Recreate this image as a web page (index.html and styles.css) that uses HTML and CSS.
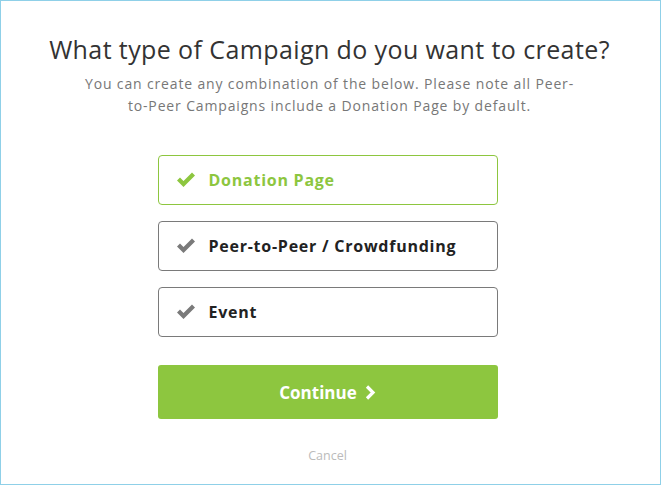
FILE: index.html
```html
<!DOCTYPE html>
<html>
<head>
<meta charset="utf-8">
<link rel="stylesheet" href="styles.css">
</head>
<body>
<div class="modal">
  <h1 class="title">What type of Campaign do you want to create?</h1>
  <p class="subtitle">You can create any combination of the below. Please note all Peer-<br>to-Peer Campaigns include a Donation Page by default.</p>
  <div class="options">
    <div class="option selected">
      <svg class="check" viewBox="0 0 20 16" width="20" height="16"><path d="M1 8.5 L4 5.5 L7.5 9 L16 0.5 L19 3.5 L7.5 15 Z"/></svg>
      <span class="label">Donation Page</span>
    </div>
    <div class="option">
      <svg class="check" viewBox="0 0 20 16" width="20" height="16"><path d="M1 8.5 L4 5.5 L7.5 9 L16 0.5 L19 3.5 L7.5 15 Z"/></svg>
      <span class="label">Peer-to-Peer / Crowdfunding</span>
    </div>
    <div class="option">
      <svg class="check" viewBox="0 0 20 16" width="20" height="16"><path d="M1 8.5 L4 5.5 L7.5 9 L16 0.5 L19 3.5 L7.5 15 Z"/></svg>
      <span class="label">Event</span>
    </div>
  </div>
  <button class="continue">Continue <svg class="chev" viewBox="0 0 11 15" width="11" height="15"><path d="M2 1.5 L8 7.5 L2 13.5" fill="none" stroke="#fff" stroke-width="3.2"/></svg></button>
  <div class="cancel">Cancel</div>
</div>
</body>
</html>
```
FILE: styles.css
```css
html, body {
  margin: 0;
  padding: 0;
  background: #fff;
}
.modal {
  box-sizing: border-box;
  width: 661px;
  height: 485px;
  border: 1px solid #8fd0e8;
  padding-right: 2px;
  display: flex;
  flex-direction: column;
  align-items: center;
  font-family: "Open Sans", sans-serif;
}
.title {
  margin: 31px 0 0;
  font-size: 25px;
  font-weight: 400;
  color: #333;
  line-height: 34px;
  letter-spacing: 0.4px;
}
.subtitle {
  margin: 7px 0 0;
  font-size: 14px;
  line-height: 22px;
  color: #777;
  text-align: center;
  letter-spacing: 0.85px;
}
.options {
  margin-top: 38px;
  margin-right: 4px;
  display: flex;
  flex-direction: column;
  gap: 16px;
}
.option {
  box-sizing: border-box;
  width: 340px;
  height: 50px;
  border: 1px solid #7a7a7a;
  border-radius: 4px;
  display: flex;
  align-items: center;
  padding-left: 17px;
}
.option.selected {
  border-color: #8dc63f;
}
.check {
  fill: #7a7a7a;
  margin-right: 13px;
}
.selected .check {
  fill: #8dc63f;
}
.label {
  font-size: 16px;
  font-weight: 700;
  color: #222;
  letter-spacing: 0.75px;
}
.selected .label {
  color: #8dc63f;
}
.continue {
  margin-top: 28px;
  margin-right: 4px;
  width: 340px;
  height: 54px;
  border: none;
  border-radius: 3px;
  background: #8dc63f;
  color: #fff;
  font-family: "Open Sans", sans-serif;
  font-size: 17px;
  font-weight: 700;
  display: flex;
  align-items: center;
  justify-content: center;
  gap: 8px;
}
.cancel {
  margin-top: 28px;
  margin-right: 4px;
  font-size: 12.5px;
  color: #bbb;
}
```
